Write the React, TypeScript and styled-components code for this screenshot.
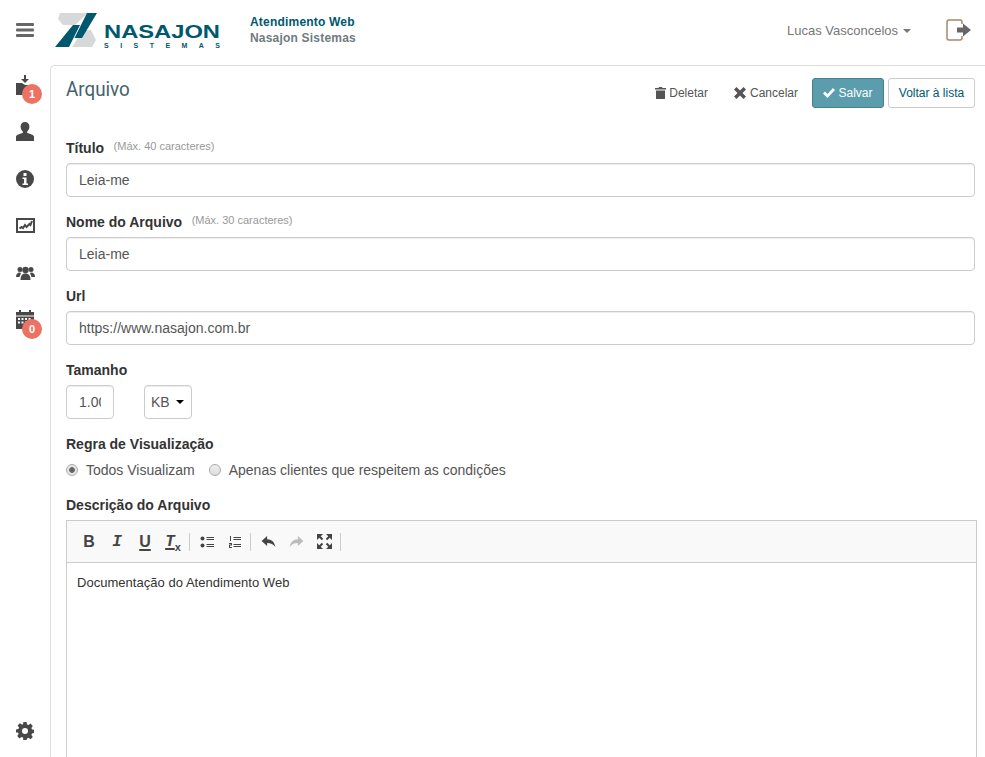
import React from "react";
import styled, { createGlobalStyle } from "styled-components";

const GlobalStyle = createGlobalStyle`
  html, body {
    margin: 0;
    height: 100%;
    overflow: hidden;
    background: #fff;
    font-family: "Liberation Sans", Arial, sans-serif;
    font-size: 14px;
    color: #333;
  }
  * { box-sizing: border-box; }
`;

const Page = styled.div`
  width: 985px;
  height: 757px;
  display: flex;
  flex-direction: column;
  overflow: hidden;
`;

const Header = styled.header`
  height: 65px;
  flex: none;
  display: flex;
  align-items: center;
`;

const MenuButton = styled.div`
  width: 50px;
  display: flex;
  justify-content: center;
  color: #666;
  padding-bottom: 5px;
`;

const LogoSlot = styled.div`
  width: 200px;
  height: 65px;
  flex: none;
`;

const SystemInfo = styled.div`
  font-size: 12px;
  font-weight: bold;
  line-height: 16px;
  letter-spacing: 0.2px;
  padding-bottom: 5px;
`;

const SystemName = styled.div`
  color: #00586f;
`;

const CompanyName = styled.div`
  color: #6f7b80;
`;

const UserArea = styled.div`
  margin-left: auto;
  display: flex;
  align-items: center;
  padding: 0 13px 5px 0;
`;

const UserName = styled.span`
  font-size: 13px;
  color: #777;
`;

const Caret = styled.span`
  display: inline-block;
  margin-left: 5px;
  border-top: 4px solid #777;
  border-left: 4px solid transparent;
  border-right: 4px solid transparent;
  vertical-align: middle;
`;

const Logout = styled.div`
  margin-left: 35px;
  display: flex;
`;

const Body = styled.div`
  flex: 1;
  display: flex;
  min-height: 0;
`;

const Sidebar = styled.nav`
  width: 50px;
  flex: none;
  display: flex;
  flex-direction: column;
  align-items: center;
  margin-top: -4px;
  padding-bottom: 15px;
`;

const SideItem = styled.div`
  position: relative;
  width: 50px;
  height: 47px;
  display: flex;
  justify-content: center;
  align-items: center;
  color: #484848;
`;

const SideBottom = styled(SideItem)`
  margin-top: auto;
  height: 22px;
`;

const Badge = styled.span`
  position: absolute;
  left: 22px;
  top: 23px;
  width: 20px;
  height: 20px;
  border-radius: 50%;
  background: #ec7263;
  color: #fff;
  font-size: 11px;
  font-weight: bold;
  line-height: 20px;
  text-align: center;
`;

const Content = styled.main`
  flex: 1;
  min-width: 0;
  border-left: 1px solid #ddd;
  border-top: 1px solid #ddd;
  border-top-left-radius: 5px;
  padding: 12px 10px 0 15px;
`;

const TitleBar = styled.div`
  display: flex;
  justify-content: space-between;
  align-items: flex-start;
  height: 60px;
`;

const PageTitle = styled.h1`
  margin: 0;
  font-family: "Roboto", sans-serif;
  font-size: 20px;
  font-weight: 400;
  line-height: 23px;
  color: #46626d;
  transform: scaleX(0.94);
  transform-origin: left center;
`;

const Actions = styled.div`
  display: flex;
  align-items: center;
  height: 30px;
`;

const LinkButton = styled.span<{ $gap: number; $iconGap: number }>`
  display: inline-flex;
  align-items: center;
  gap: ${({ $iconGap }) => $iconGap}px;
  font-size: 12px;
  color: #555;
  margin-right: ${({ $gap }) => $gap}px;
`;

const SaveButton = styled.span`
  display: inline-flex;
  align-items: center;
  justify-content: center;
  gap: 3px;
  width: 72px;
  height: 30px;
  font-size: 12px;
  color: #fff;
  background: #5b9cad;
  border: 1px solid #46808f;
  border-radius: 3px;
  margin-right: 4px;
`;

const BackButton = styled.span`
  display: inline-flex;
  align-items: center;
  justify-content: center;
  width: 87px;
  height: 30px;
  font-size: 12px;
  color: #00586f;
  background: #fff;
  border: 1px solid #ccc;
  border-radius: 3px;
`;

const Field = styled.div`
  margin-bottom: 15px;
`;

const LabelRow = styled.div`
  display: flex;
  align-items: baseline;
  height: 20px;
  margin-bottom: 5px;
  line-height: 20px;
`;

const Label = styled.label`
  font-size: 14px;
  font-weight: bold;
  color: #333;
`;

const Hint = styled.small`
  font-size: 11px;
  color: #999;
  margin-left: 9.5px;
  position: relative;
  top: -3px;
`;

const Input = styled.input`
  display: block;
  width: ${({ width }) => (width ? `${width}px` : "100%")};
  height: 34px;
  padding: 6px 12px;
  font-family: inherit;
  font-size: 14px;
  color: #555;
  background: #fff;
  border: 1px solid #ccc;
  border-radius: 4px;
  box-shadow: inset 0 1px 1px rgba(0, 0, 0, 0.075);
  outline: none;
`;

const SizeRow = styled.div`
  display: flex;
  gap: 30px;
`;

const FakeSelect = styled.div`
  width: 48px;
  height: 34px;
  display: flex;
  align-items: center;
  padding-left: 6px;
  gap: 6px;
  font-size: 14px;
  color: #555;
  border: 1px solid #ccc;
  border-radius: 4px;
  box-shadow: inset 0 1px 1px rgba(0, 0, 0, 0.075);
`;

const SelectArrow = styled.span`
  border-top: 4px solid #000;
  border-left: 4px solid transparent;
  border-right: 4px solid transparent;
`;

const RadioRow = styled.div`
  display: flex;
  align-items: center;
  height: 20px;
  margin-top: 6px;
  margin-bottom: 15px;
  color: #555;
  font-size: 14px;
`;

const Radio = styled.span<{ $checked?: boolean }>`
  width: 12px;
  height: 12px;
  border-radius: 50%;
  border: 1px solid #aaa;
  background: ${({ $checked }) =>
    $checked
      ? "radial-gradient(circle, #666 0 2.5px, #e6e6e6 3.2px)"
      : "linear-gradient(#eee, #ddd)"};
  margin-right: 8px;
`;

const RadioText = styled.span`
  margin-right: 14px;
`;

const Editor = styled.div`
  width: 911px;
  height: 400px;
  border: 1px solid #ccc;
`;

const EditorToolbar = styled.div`
  height: 42px;
  display: flex;
  align-items: center;
  padding-left: 8px;
  background: #f9f9f9;
  border-bottom: 1px solid #ccc;
`;

const ToolButton = styled.span<{ $italic?: boolean; $underline?: boolean; $mono?: boolean }>`
  width: 28px;
  height: 24px;
  display: flex;
  align-items: center;
  justify-content: center;
  font-size: 16px;
  font-weight: bold;
  color: #444;
  font-style: ${({ $italic }) => ($italic ? "italic" : "normal")};
  text-decoration: ${({ $underline }) => ($underline ? "underline 2px" : "none")};
  text-underline-offset: 2px;
  font-family: ${({ $mono }) => ($mono ? '"Liberation Mono", monospace' : "inherit")};
`;

const UnderlinedGlyph = styled.span`
  text-decoration: underline 2px;
  text-underline-offset: 2px;
`;

const Sub = styled.sub`
  font-size: 11px;
  font-style: normal;
  font-family: "Liberation Sans", sans-serif;
  line-height: 0;
  position: relative;
  top: 5px;
  vertical-align: baseline;
`;

const ToolDivider = styled.span`
  width: 1px;
  height: 18px;
  background: #ccc;
  margin: 0 3px 0 1.5px;
`;

const EditorBody = styled.div`
  padding: 12px 10px;
  font-size: 13px;
  line-height: 16px;
  letter-spacing: 0.03px;
  color: #333;
`;

const Bars = () => (
  <svg width="18" height="14" viewBox="0 0 18 14" fill="currentColor">
    <rect y="0" width="18" height="3" rx="1" />
    <rect y="5.5" width="18" height="3" rx="1" />
    <rect y="11" width="18" height="3" rx="1" />
  </svg>
);

const Logo = () => (
  <svg width="200" height="65" viewBox="0 0 200 65">
    <path d="M10 13H38L25 25H13L8 19Z" fill="#d6d8d9" />
    <path d="M33 30H41L46 40L42 47H22Z" fill="#d6d8d9" />
    <path d="M5 47L23 25H30L19 47Z" fill="#00586f" />
    <path d="M24.500 38L37 13H47L32 38Z" fill="#00586f" />
    <text
      x="54"
      y="38"
      fontFamily="Liberation Sans, sans-serif"
      fontWeight="bold"
      fontSize="19"
      fill="#00586f"
      textLength="116"
      lengthAdjust="spacingAndGlyphs"
    >
      NASAJON
    </text>
    <text
      x="54"
      y="48"
      fontFamily="Liberation Sans, sans-serif"
      fontSize="7"
      fontWeight="bold"
      fill="#00586f"
      textLength="116"
      lengthAdjust="spacing"
    >
      SISTEMAS
    </text>
  </svg>
);

const LogoutIcon = () => (
  <svg width="26" height="22" viewBox="0 0 26 22" fill="none">
    <path d="M16 5V3a2 2 0 0 0-2-2H3a2 2 0 0 0-2 2v16a2 2 0 0 0 2 2h11a2 2 0 0 0 2-2v-2" stroke="#a8876f" strokeWidth="1.5" />
    <path d="M11 8.5h6V4.5L25 11l-8 6.500v-4h-6z" fill="#666" />
  </svg>
);

const ImportIcon = () => (
  <svg width="18" height="20" viewBox="0 0 18 20" fill="currentColor">
    <path d="M8 0h2v4h3L9 8 5 4h3z" />
    <path d="M0 8h6l3 2h9v10H0z" />
  </svg>
);

const UserIcon = () => (
  <svg width="18" height="19" viewBox="0 0 18 19" fill="currentColor">
    <path d="M9 0c2.600 0 4.400 2 4.400 4.800 0 2-1 3.800-2.200 4.700v1.400c3 1 6.200 1.600 6.800 3.600V19H0v-4.500c.6-2 3.800-2.600 6.800-3.600V9.500C5.600 8.600 4.600 6.800 4.600 4.800 4.600 2 6.400 0 9 0z" />
  </svg>
);

const InfoIcon = () => (
  <svg width="18" height="18" viewBox="0 0 18 18">
    <circle cx="9" cy="9" r="9" fill="currentColor" />
    <rect x="7.500" y="3" width="3" height="3" fill="#fff" />
    <path d="M6.500 7.500h4v6h1.500v1.500H6.500v-1.500H8V9H6.500z" fill="#fff" />
  </svg>
);

const ChartIcon = () => (
  <svg width="19" height="15" viewBox="0 0 19 15">
    <rect x="1" y="1" width="17" height="13" fill="none" stroke="currentColor" strokeWidth="2" />
    <path d="M3.500 10.500l2-1.500 1.500 1 2-3 1.500 2 2-2 1-1 1 1 1.500-4" fill="none" stroke="currentColor" strokeWidth="2" />
  </svg>
);

const GroupIcon = () => (
  <svg width="19" height="14" viewBox="0 0 19 14" fill="currentColor">
    <circle cx="4" cy="3.500" r="2.500" />
    <circle cx="15" cy="3.500" r="2.500" />
    <path d="M0 11c0-3 1.500-4.500 4-4.500L5 7 3.500 11z" />
    <path d="M19 11c0-3-1.500-4.500-4-4.500L14 7l1.500 4z" />
    <circle cx="9.500" cy="4" r="3.200" />
    <path d="M4.500 14c0-4 1.500-6.500 5-6.500s5 2.500 5 6.500z" />
  </svg>
);

const CalendarIcon = () => (
  <svg width="18" height="19" viewBox="0 0 18 19" fill="currentColor">
    <rect x="3" y="0" width="2" height="3" />
    <rect x="13" y="0" width="2" height="3" />
    <rect x="0" y="2" width="18" height="3.500" />
    <path d="M0 6.500h18V19H0zM2 8v2h2V8zm3.500 0v2h2V8zm3.500 0v2h2V8zm3.500 0v2h2V8zM2 11.500v2h2v-2zm3.500 0v2h2v-2zm3.500 0v2h2v-2zm3.500 0v2h2v-2z" fillRule="evenodd" />
  </svg>
);

const GearIcon = () => (
  <svg width="18" height="18" viewBox="0 0 18 18" fill="currentColor">
    <path
      fillRule="evenodd"
      d="M7.400 0h3.200l.4 2.400 1.500.6 2-1.400 2.300 2.300-1.400 2 .6 1.500 2.400.4v3.200l-2.400.4-.6 1.500 1.400 2-2.300 2.300-2-1.400-1.500.6-.4 2.400H7.400L7 15.600 5.500 15l-2 1.400-2.300-2.300 1.400-2-.6-1.500L0 10.600V7.400l2.400-.4.6-1.500-1.400-2 2.300-2.300 2 1.400L7 2.400zM9 6a3 3 0 1 0 0 6 3 3 0 0 0 0-6z"
    />
  </svg>
);

const TrashIcon = () => (
  <svg width="11" height="12" viewBox="0 0 11 12" fill="currentColor">
    <path d="M4 0h3l.5 1H11v1.500H0V1h3.500zM1 3.500h9V12H1z" />
  </svg>
);

const CrossIcon = () => (
  <svg width="12" height="12" viewBox="0 0 12 12" fill="currentColor">
    <path d="M2.500 0L6 3.500 9.500 0 12 2.500 8.500 6 12 9.500 9.500 12 6 8.500 2.500 12 0 9.500 3.500 6 0 2.500z" />
  </svg>
);

const CheckIcon = () => (
  <svg width="12" height="10" viewBox="0 0 12 10" fill="currentColor">
    <path d="M0 5.500L2 3.500 4.500 6 10 0l2 2-7.500 8z" />
  </svg>
);

const BulletIcon = () => (
  <svg width="14" height="12" viewBox="0 0 14 12" fill="#444">
    <circle cx="2.500" cy="2.500" r="2" />
    <circle cx="2.500" cy="9.500" r="2" />
    <rect x="6.500" y="1" width="7.500" height="1" />
    <rect x="6.500" y="3" width="7.500" height="1" />
    <rect x="6.500" y="8" width="7.500" height="1" />
    <rect x="6.500" y="10" width="7.500" height="1" />
  </svg>
);

const NumberedIcon = () => (
  <svg width="12" height="12" viewBox="0 0 12 12" fill="#444">
    <rect x="1" y="0" width="1" height="5" />
    <path d="M0 7h3v2.500H1V11h2v1H0V8.500h2V8H0z" />
    <rect x="4.500" y="1" width="7.500" height="1" />
    <rect x="4.500" y="3" width="7.500" height="1" />
    <rect x="4.500" y="8" width="7.500" height="1" />
    <rect x="4.500" y="10" width="7.500" height="1" />
  </svg>
);

const UndoIcon = ({ flip, color }: { flip?: boolean; color: string }) => (
  <svg width="15" height="11" viewBox="0 0 15 12" fill={color} style={flip ? { transform: "scaleX(-1)" } : undefined}>
    <path d="M6 0v3.500c5 0 8 3 9 8.500-2-3-5-4.500-9-4.500V11L0 5.500z" />
  </svg>
);

const ExpandIcon = () => (
  <svg width="15" height="15" viewBox="0 0 15 15" fill="#444" stroke="#444">
    <path strokeWidth="0" d="M0 0h6L0 6zM15 0v6L9 0zM0 15V9l6 6zM15 15H9l6-6z" />
    <path strokeWidth="2" d="M2 2l3.500 3.500M13 2L9.500 5.500M2 13l3.500-3.500M13 13L9.500 9.500" />
  </svg>
);

export default function App() {
  return (
    <Page>
      <GlobalStyle />
      <Header>
        <MenuButton>
          <Bars />
        </MenuButton>
        <LogoSlot>
          <Logo />
        </LogoSlot>
        <SystemInfo>
          <SystemName>Atendimento Web</SystemName>
          <CompanyName>Nasajon Sistemas</CompanyName>
        </SystemInfo>
        <UserArea>
          <UserName>
            Lucas Vasconcelos
            <Caret />
          </UserName>
          <Logout>
            <LogoutIcon />
          </Logout>
        </UserArea>
      </Header>
      <Body>
        <Sidebar>
          <SideItem>
            <ImportIcon />
            <Badge>1</Badge>
          </SideItem>
          <SideItem>
            <UserIcon />
          </SideItem>
          <SideItem>
            <InfoIcon />
          </SideItem>
          <SideItem>
            <ChartIcon />
          </SideItem>
          <SideItem>
            <GroupIcon />
          </SideItem>
          <SideItem>
            <CalendarIcon />
            <Badge>0</Badge>
          </SideItem>
          <SideBottom>
            <GearIcon />
          </SideBottom>
        </Sidebar>
        <Content>
          <TitleBar>
            <PageTitle>Arquivo</PageTitle>
            <Actions>
              <LinkButton $gap={26} $iconGap={3}>
                <TrashIcon />
                Deletar
              </LinkButton>
              <LinkButton $gap={14} $iconGap={4}>
                <CrossIcon />
                Cancelar
              </LinkButton>
              <SaveButton>
                <CheckIcon />
                Salvar
              </SaveButton>
              <BackButton>Voltar à lista</BackButton>
            </Actions>
          </TitleBar>
          <Field>
            <LabelRow>
              <Label>Título</Label>
              <Hint>(Máx. 40 caracteres)</Hint>
            </LabelRow>
            <Input defaultValue="Leia-me" />
          </Field>
          <Field>
            <LabelRow>
              <Label>Nome do Arquivo</Label>
              <Hint>(Máx. 30 caracteres)</Hint>
            </LabelRow>
            <Input defaultValue="Leia-me" />
          </Field>
          <Field>
            <LabelRow>
              <Label>Url</Label>
            </LabelRow>
            <Input defaultValue="https://www.nasajon.com.br" />
          </Field>
          <Field>
            <LabelRow>
              <Label>Tamanho</Label>
            </LabelRow>
            <SizeRow>
              <Input width={48} defaultValue="1.00" />
              <FakeSelect>
                KB
                <SelectArrow />
              </FakeSelect>
            </SizeRow>
          </Field>
          <LabelRow>
            <Label>Regra de Visualização</Label>
          </LabelRow>
          <RadioRow>
            <Radio $checked />
            <RadioText>Todos Visualizam</RadioText>
            <Radio />
            <span>Apenas clientes que respeitem as condições</span>
          </RadioRow>
          <LabelRow>
            <Label>Descrição do Arquivo</Label>
          </LabelRow>
          <Editor>
            <EditorToolbar>
              <ToolButton>B</ToolButton>
              <ToolButton $italic $mono>I</ToolButton>
              <ToolButton $underline>U</ToolButton>
              <ToolButton $italic $mono>
                <UnderlinedGlyph>T</UnderlinedGlyph>
                <Sub>x</Sub>
              </ToolButton>
              <ToolDivider />
              <ToolButton>
                <BulletIcon />
              </ToolButton>
              <ToolButton>
                <NumberedIcon />
              </ToolButton>
              <ToolDivider />
              <ToolButton>
                <UndoIcon color="#444" />
              </ToolButton>
              <ToolButton>
                <UndoIcon flip color="#bbb" />
              </ToolButton>
              <ToolButton>
                <ExpandIcon />
              </ToolButton>
              <ToolDivider />
            </EditorToolbar>
            <EditorBody>Documentação do Atendimento Web</EditorBody>
          </Editor>
        </Content>
      </Body>
    </Page>
  );
}
